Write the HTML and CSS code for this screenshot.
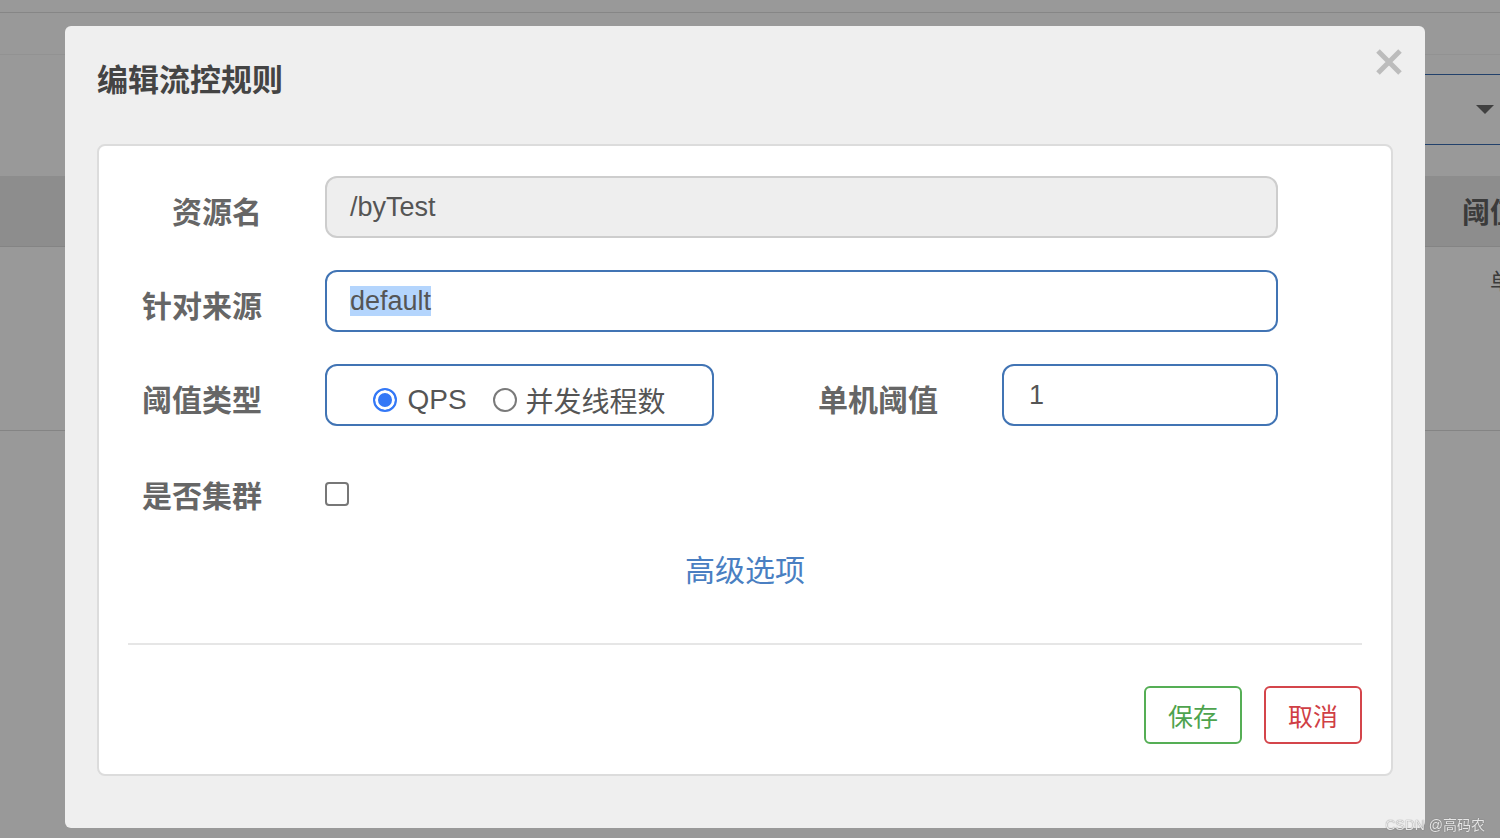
FILE: index.html
```html
<!DOCTYPE html>
<html lang="zh-CN">
<head>
    <meta charset="UTF-8">
    <meta name="viewport" content="width=device-width, initial-scale=1.0">
    <title>编辑流控规则</title>
    <link rel="stylesheet" href="styles.css">
</head>
<body>
    <!-- page behind the dialog -->
    <div class="page">
        <div class="topbar"></div>
        <div class="navbar"></div>
        <div class="toolbar">
            <div class="select"><span class="caret"></span></div>
        </div>
        <div class="table">
            <div class="thead">
                <div class="cell spacer"></div>
                <div class="cell">阈值类型</div>
            </div>
            <div class="tbody">
                <div class="cell spacer"></div>
                <div class="cell small">单机</div>
            </div>
        </div>
    </div>

    <div class="overlay">
        <div class="modal">
            <button class="close" type="button">
                <svg width="28" height="28" viewBox="0 0 28 28">
                    <path d="M3 3 L25 25 M25 3 L3 25" stroke="#bcbcbc" stroke-width="5" fill="none"/>
                </svg>
            </button>
            <h4 class="modal-title">编辑流控规则</h4>

            <div class="panel">
                <div class="form-row">
                    <label class="label">资源名</label>
                    <div class="input disabled">/byTest</div>
                </div>
                <div class="form-row">
                    <label class="label">针对来源</label>
                    <div class="input"><span class="selected">default</span></div>
                </div>
                <div class="form-row">
                    <label class="label">阈值类型</label>
                    <div class="radio-box">
                        <span class="radio checked"></span>
                        <span class="radio-text">QPS</span>
                        <span class="radio"></span>
                        <span class="radio-text cjk">并发线程数</span>
                    </div>
                    <label class="label inline">单机阈值</label>
                    <div class="input short">1</div>
                </div>
                <div class="form-row cluster">
                    <label class="label">是否集群</label>
                    <span class="checkbox"></span>
                </div>

                <div class="advanced">高级选项</div>

                <div class="divider"></div>

                <div class="actions">
                    <button class="btn btn-save" type="button">保存</button>
                    <button class="btn btn-cancel" type="button">取消</button>
                </div>
            </div>
        </div>
        <div class="watermark">CSDN @高码农</div>
    </div>
</body>
</html>
```

FILE: styles.css
```css
body {
    margin: 0;
    height: 838px;
    overflow: hidden;
    background-color: #fff;
    font-family: "Liberation Sans", "Noto Sans CJK SC", sans-serif;
}

/* page behind */
.page {
    height: 838px;
}

.topbar {
    height: 12px;
    border-bottom: 1px solid #e0e0e0;
}

.navbar {
    height: 41px;
    border-bottom: 1px solid #f4f4f4;
}

.toolbar {
    box-sizing: border-box;
    height: 121px;
    padding-top: 19px;
    display: flex;
    justify-content: flex-end;
    align-items: flex-start;
}

.select {
    box-sizing: border-box;
    width: 400px;
    height: 71px;
    margin-right: -10px;
    border-top: 1px solid #3a6db3;
    border-bottom: 1px solid #3a6db3;
    display: flex;
    justify-content: flex-end;
    align-items: center;
}

.caret {
    width: 0;
    height: 0;
    margin-right: 16px;
    border-left: 9px solid transparent;
    border-right: 9px solid transparent;
    border-top: 9px solid #6b6b6b;
}

.table .thead,
.table .tbody {
    display: flex;
    font-family: "Noto Sans CJK SC", sans-serif;
    color: #636363;
    white-space: nowrap;
}

.thead {
    height: 70px;
    align-items: center;
    background-color: #ececec;
    border-bottom: 1px solid #dcdcdc;
    font-size: 28px;
    font-weight: bold;
}

.tbody {
    height: 183px;
    border-bottom: 1px solid #dcdcdc;
    font-size: 22px;
}

.cell.spacer {
    width: 1462px;
    flex-shrink: 0;
}

.cell.small {
    padding-left: 28px;
    padding-top: 16px;
}

/* dialog */
.overlay {
    position: fixed;
    inset: 0;
    background-color: rgba(0, 0, 0, 0.4);
}

.modal {
    position: relative;
    box-sizing: border-box;
    width: 1360px;
    height: 802px;
    margin: 26px 0 0 65px;
    padding: 34px 32px 0;
    background-color: #efefef;
    border-radius: 6px;
}

.close {
    position: absolute;
    top: 22px;
    right: 22px;
    padding: 0;
    border: 0;
    background: none;
    line-height: 0;
}

.modal-title {
    margin: 0;
    font-family: "Noto Sans CJK SC", sans-serif;
    font-size: 31px;
    line-height: 36px;
    font-weight: bold;
    color: #444;
}

.panel {
    box-sizing: border-box;
    height: 632px;
    margin-top: 48px;
    padding: 30px 29px;
    background-color: #fff;
    border: 2px solid #dcdcdc;
    border-radius: 8px;
}

.form-row {
    display: flex;
    align-items: center;
    height: 62px;
    margin-bottom: 32px;
}

.form-row.cluster {
    padding-top: 5px;
    margin-bottom: 0;
}

.label {
    width: 134px;
    flex-shrink: 0;
    margin-right: 63px;
    padding-top: 5px;
    text-align: right;
    font-family: "Noto Sans CJK SC", sans-serif;
    font-size: 30px;
    line-height: 36px;
    font-weight: bold;
    color: #666;
}

.cluster .label {
    padding-top: 0;
}

.label.inline {
    width: 122px;
    margin-left: 104px;
    margin-right: 62px;
    text-align: left;
}

.input {
    box-sizing: border-box;
    width: 953px;
    height: 62px;
    padding: 0 23px;
    border: 2px solid #4174b4;
    border-radius: 12px;
    font-size: 27px;
    line-height: 58px;
    color: #555;
}

.input.disabled {
    background-color: #eee;
    border-color: #cdcdcd;
}

.input.short {
    width: 276px;
    padding-left: 25px;
}

.selected {
    background-color: #b4d5fd;
}

.radio-box {
    box-sizing: border-box;
    width: 389px;
    height: 62px;
    padding-top: 10px;
    display: flex;
    align-items: center;
    justify-content: center;
    border: 2px solid #4174b4;
    border-radius: 12px;
    font-size: 28px;
    color: #555;
}

.radio {
    box-sizing: border-box;
    width: 24px;
    height: 24px;
    border: 2px solid #7a7a7a;
    border-radius: 50%;
    background-color: #fff;
}

.radio.checked {
    border-color: #3478f6;
    background-color: #3478f6;
    box-shadow: inset 0 0 0 3px #fff;
}

.radio-text {
    margin-left: 10px;
    margin-right: 26px;
}

.radio-text.cjk {
    margin-left: 9px;
    margin-right: 0;
    font-family: "Noto Sans CJK SC", sans-serif;
}

.checkbox {
    box-sizing: border-box;
    width: 24px;
    height: 24px;
    border: 2px solid #777;
    border-radius: 4px;
}

.advanced {
    margin-top: 25px;
    text-align: center;
    font-family: "Noto Sans CJK SC", sans-serif;
    font-size: 30px;
    line-height: 36px;
    color: #4a7fc2;
}

.divider {
    margin-top: 57px;
    border-top: 2px solid #e6e6e6;
}

.actions {
    display: flex;
    justify-content: flex-end;
    gap: 22px;
    margin-top: 41px;
}

.btn {
    box-sizing: border-box;
    width: 98px;
    height: 58px;
    padding: 0;
    background-color: #fff;
    border: 2px solid;
    border-radius: 6px;
    font-family: "Noto Sans CJK SC", sans-serif;
    font-size: 25px;
}

.btn-save {
    border-color: #55ae55;
    color: #4ea34e;
}

.btn-cancel {
    border-color: #d4454b;
    color: #d03f45;
}

.watermark {
    position: absolute;
    right: 15px;
    bottom: 4px;
    font-family: "Liberation Sans", "Noto Sans CJK SC", sans-serif;
    font-size: 14px;
    color: rgba(255, 255, 255, 0.85);
    text-shadow: 0 0 1px #555;
}
```
